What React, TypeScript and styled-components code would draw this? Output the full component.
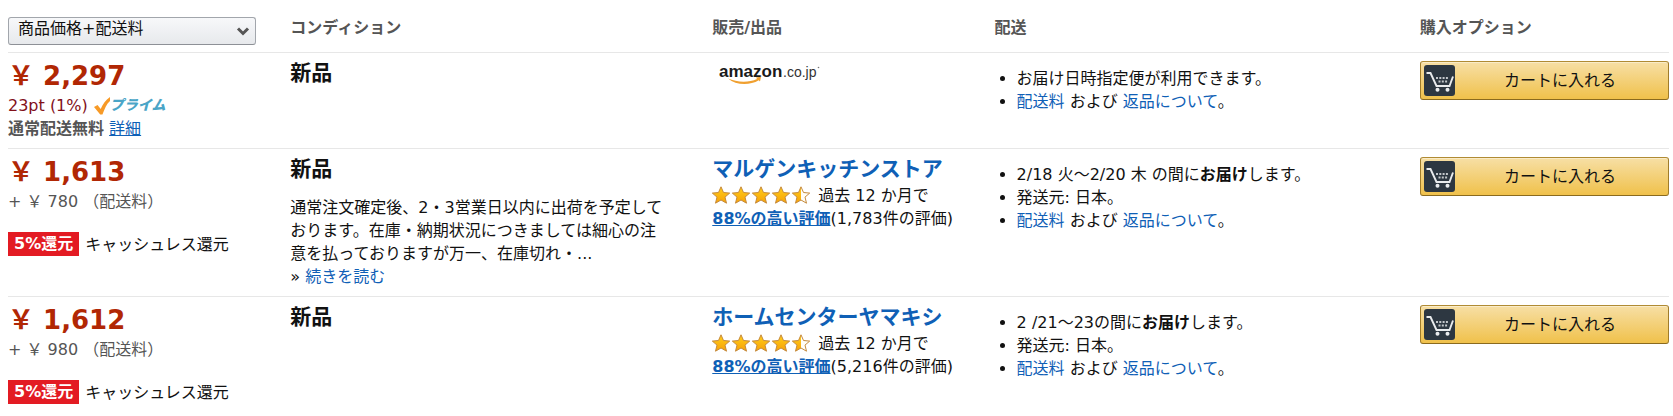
import React from "react";
import styled, { createGlobalStyle } from "styled-components";

const GlobalStyle = createGlobalStyle`
  *, *::before, *::after { box-sizing: border-box; }
  body {
    margin: 0;
    background: #fff;
    color: #111;
    font: 16px/23px "DejaVu Sans", "Noto Sans CJK JP", sans-serif;
  }
`;

const Page = styled.main`
  padding: 0 4px 0 8px;
`;

const Table = styled.table`
  width: 100%;
  table-layout: fixed;
  border-collapse: separate;
  border-spacing: 0;
`;

const Col = styled.col<{ $share: string }>`
  width: ${(p) => p.$share};
`;

const HeadCell = styled.th`
  height: 53px;
  padding: 3px 0 0;
  border-bottom: 1px solid #e7e7e7;
  color: #555;
  font-weight: 700;
  text-align: left;
  vertical-align: middle;
`;

const Row = styled.tr`
  &:not(:last-child) > td { border-bottom: 1px solid #e7e7e7; }
`;

const Cell = styled.td`
  padding: 6px 0 8px;
  vertical-align: top;
`;

const ActionCell = styled(Cell)`
  padding-top: 8px;
`;

const SortBox = styled.div`
  position: relative;
  width: 248px;
  max-width: 90%;
  margin-top: 6px;
  font-weight: 400;
`;

const SortSelect = styled.select`
  appearance: none;
  display: block;
  width: 100%;
  height: 28px;
  padding: 0 30px 4px 9px;
  border: 1px solid #a2a6ac;
  border-bottom-color: #8d9096;
  border-radius: 3px;
  background: linear-gradient(#f7f8fa, #e7e9ec);
  color: #111;
  font: inherit;
  line-height: 22px;
`;

const SortArrow = styled.svg`
  position: absolute;
  top: 9px;
  right: 6px;
  pointer-events: none;
`;

const Price = styled.div`
  color: #b12704;
  font-size: 26px;
  font-weight: 700;
  line-height: 35px;
`;

const Points = styled.div`
  display: flex;
  align-items: center;
  gap: 6px;
  height: 23px;
  color: #82101a;
`;

const PrimeBadge = styled.span`
  display: inline-flex;
  align-items: center;
  color: #4aa5c7;
  font-size: 14px;
  font-weight: 900;
  font-style: italic;
`;

const FreeShipping = styled.div`
  color: #555;
`;

const ShippingFee = styled.div`
  color: #555;
`;

const Cashback = styled.div`
  display: flex;
  align-items: center;
  gap: 6px;
  margin-top: 19px;
`;

const CashbackRate = styled.strong`
  padding: 0 6px;
  background: #e31b23;
  color: #fff;
  line-height: 24px;
`;

const Link = styled.a<{ $underlined?: boolean }>`
  color: #0f60b6;
  text-decoration: ${(p) => (p.$underlined ? "underline" : "none")};
`;

const Condition = styled.div`
  font-size: 21px;
  font-weight: 700;
  line-height: 28px;
`;

const Note = styled.p`
  max-width: 380px;
  margin: 13px 0 0;
`;

const SellerName = styled(Link)`
  display: block;
  font-size: 21px;
  font-weight: 700;
  line-height: 29px;
`;

const RatingLine = styled.div`
  display: flex;
  align-items: center;
  gap: 8px;
`;

const RatingLink = styled(Link)`
  font-weight: 700;
`;

const LogoLink = styled.a`
  display: block;
  width: 112px;
  padding: 4px 0 0 7px;
`;

const DeliveryList = styled.ul`
  margin: 8px 0 0;
  padding-left: 22px;
`;

const CartButton = styled.button`
  display: flex;
  align-items: center;
  width: 100%;
  height: 39px;
  padding: 0 3px;
  border: 1px solid #a88734;
  border-color: #b08b34 #a07c2a #8a6a1e;
  border-radius: 3px;
  background: linear-gradient(#f7dfa5, #f0c14b);
  box-shadow: inset 0 1px 0 rgba(255, 255, 255, 0.4);
  color: #111;
  font: inherit;
  cursor: pointer;
`;

const CartLabel = styled.span`
  flex: 1;
  text-align: center;
`;

function CartIcon() {
  return (
    <svg width="31" height="31" viewBox="0 0 31 31" aria-hidden="true">
      <rect width="31" height="31" rx="3" fill="#2d3741" />
      <g fill="none" stroke="#e9ebed">
        <path d="M2.500 8h4l6 13h13l3.500-9.500" strokeWidth="1.900" />
        <path d="M12 13h13" strokeWidth="2" strokeDasharray="2 1.300" stroke="#c3c7cb" />
        <path d="M14.500 16.500h9" strokeWidth="2" strokeDasharray="2 1.300" stroke="#c3c7cb" />
      </g>
      <circle cx="13.500" cy="24.800" r="2" fill="#e9ebed" />
      <circle cx="23.500" cy="24.800" r="2" fill="#e9ebed" />
    </svg>
  );
}

const STAR = "M9 .8l2.500 5.700 6.200.6-4.700 4 1.500 6.100L9 14l-5.500 3.200L5 11.100.3 7.100l6.200-.6z";

function Stars() {
  return (
    <svg width="98" height="19" viewBox="0 0 98 19" role="img" aria-label="5つ星のうち4.5">
      <defs>
        <linearGradient id="gold" x1="0" y1="0" x2="0" y2="1">
          <stop offset="0" stopColor="#ffce1a" />
          <stop offset="1" stopColor="#f7a208" />
        </linearGradient>
        <clipPath id="leftHalf"><rect width="9" height="19" /></clipPath>
      </defs>
      {[0, 20, 40, 60].map((x) => (
        <path key={x} transform={`translate(${x} 0)`} d={STAR} fill="url(#gold)" stroke="#c58a3c" strokeWidth="1" />
      ))}
      <g transform="translate(80 0)">
        <path d={STAR} fill="#fffdf6" />
        <path d={STAR} fill="url(#gold)" clipPath="url(#leftHalf)" />
        <path d={STAR} fill="none" stroke="#c58a3c" strokeWidth="1" />
      </g>
    </svg>
  );
}

function AmazonLogo() {
  return (
    <svg width="105" height="24" viewBox="0 0 105 24" role="img" aria-label="amazon.co.jp">
      <g fontFamily="'Liberation Sans', sans-serif">
        <text x="0" y="14" fontSize="17" fontWeight="700" fill="#1a1a1a">amazon</text>
        <text x="64" y="14" fontSize="14" fill="#333">.co.jp</text>
      </g>
      <path d="M9 15.500c9 4 21 4.200 29 .5l-1-1.500 5-.7-1 4.700-1.200-1.300C31 22.500 17 22.500 9 15.500z" fill="#f0a030" />
      <circle cx="99.500" cy="4.500" r=".8" fill="#777" />
    </svg>
  );
}

function PrimeLogo() {
  return (
    <PrimeBadge>
      <svg width="16" height="19" viewBox="0 0 18 19" preserveAspectRatio="none" aria-hidden="true">
        <path d="M0 11l4-2 3.500 4C10 8 13 4 18 1v4C14 8 12 13 9.500 18.500H7z" fill="#f79a27" />
      </svg>
      プライム
    </PrimeBadge>
  );
}

function ShippingTerms() {
  return (
    <li>
      <Link href="#shipping">配送料</Link> および <Link href="#returns">返品について</Link>。
    </li>
  );
}

function AddToCart() {
  return (
    <CartButton type="button">
      <CartIcon />
      <CartLabel>カートに入れる</CartLabel>
    </CartButton>
  );
}

function SellerPrice({ price, fee }: { price: string; fee: string }) {
  return (
    <>
      <Price>￥ {price}</Price>
      <ShippingFee>+ ￥ {fee} （配送料）</ShippingFee>
      <Cashback>
        <CashbackRate>5%還元</CashbackRate>
        <span>キャッシュレス還元</span>
      </Cashback>
    </>
  );
}

function Seller({ name, count }: { name: string; count: string }) {
  return (
    <>
      <SellerName href="#seller">{name}</SellerName>
      <RatingLine>
        <Stars />
        <span>過去 12 か月で</span>
      </RatingLine>
      <div>
        <RatingLink href="#ratings" $underlined>88%の高い評価</RatingLink>({count}件の評価)
      </div>
    </>
  );
}

export default function App() {
  return (
    <Page>
      <GlobalStyle />
      <Table>
        <colgroup>
          <Col $share="17%" />
          <Col $share="25.4%" />
          <Col $share="17%" />
          <Col $share="25.6%" />
          <Col $share="15%" />
        </colgroup>
        <thead>
          <tr>
            <HeadCell scope="col">
              <SortBox>
                <SortSelect aria-label="並べ替え" defaultValue="total">
                  <option value="total">商品価格+配送料</option>
                </SortSelect>
                <SortArrow width="14" height="11" viewBox="0 0 14 11" aria-hidden="true">
                  <path d="M2 2.500l5 5 5-5" fill="none" stroke="#555" strokeWidth="3" />
                </SortArrow>
              </SortBox>
            </HeadCell>
            <HeadCell scope="col">コンディション</HeadCell>
            <HeadCell scope="col">販売/出品</HeadCell>
            <HeadCell scope="col">配送</HeadCell>
            <HeadCell scope="col">購入オプション</HeadCell>
          </tr>
        </thead>
        <tbody>
          <Row>
            <Cell>
              <Price>￥ 2,297</Price>
              <Points>
                <span>23pt (1%)</span>
                <PrimeLogo />
              </Points>
              <FreeShipping>
                <strong>通常配送無料</strong> <Link href="#details" $underlined>詳細</Link>
              </FreeShipping>
            </Cell>
            <Cell><Condition>新品</Condition></Cell>
            <Cell><LogoLink href="#amazon"><AmazonLogo /></LogoLink></Cell>
            <Cell>
              <DeliveryList>
                <li>お届け日時指定便が利用できます。</li>
                <ShippingTerms />
              </DeliveryList>
            </Cell>
            <ActionCell><AddToCart /></ActionCell>
          </Row>
          <Row>
            <Cell><SellerPrice price="1,613" fee="780" /></Cell>
            <Cell>
              <Condition>新品</Condition>
              <Note>
                通常注文確定後、2・3営業日以内に出荷を予定しております。在庫・納期状況につきましては細心の注意を払っておりますが万一、在庫切れ・...
                <br />
                » <Link href="#more">続きを読む</Link>
              </Note>
            </Cell>
            <Cell><Seller name="マルゲンキッチンストア" count="1,783" /></Cell>
            <Cell>
              <DeliveryList>
                <li>2/18 火～2/20 木 の間に<strong>お届け</strong>します。</li>
                <li>発送元: 日本。</li>
                <ShippingTerms />
              </DeliveryList>
            </Cell>
            <ActionCell><AddToCart /></ActionCell>
          </Row>
          <Row>
            <Cell><SellerPrice price="1,612" fee="980" /></Cell>
            <Cell><Condition>新品</Condition></Cell>
            <Cell><Seller name="ホームセンターヤマキシ" count="5,216" /></Cell>
            <Cell>
              <DeliveryList>
                <li>2 /21～23の間に<strong>お届け</strong>します。</li>
                <li>発送元: 日本。</li>
                <ShippingTerms />
              </DeliveryList>
            </Cell>
            <ActionCell><AddToCart /></ActionCell>
          </Row>
        </tbody>
      </Table>
    </Page>
  );
}
